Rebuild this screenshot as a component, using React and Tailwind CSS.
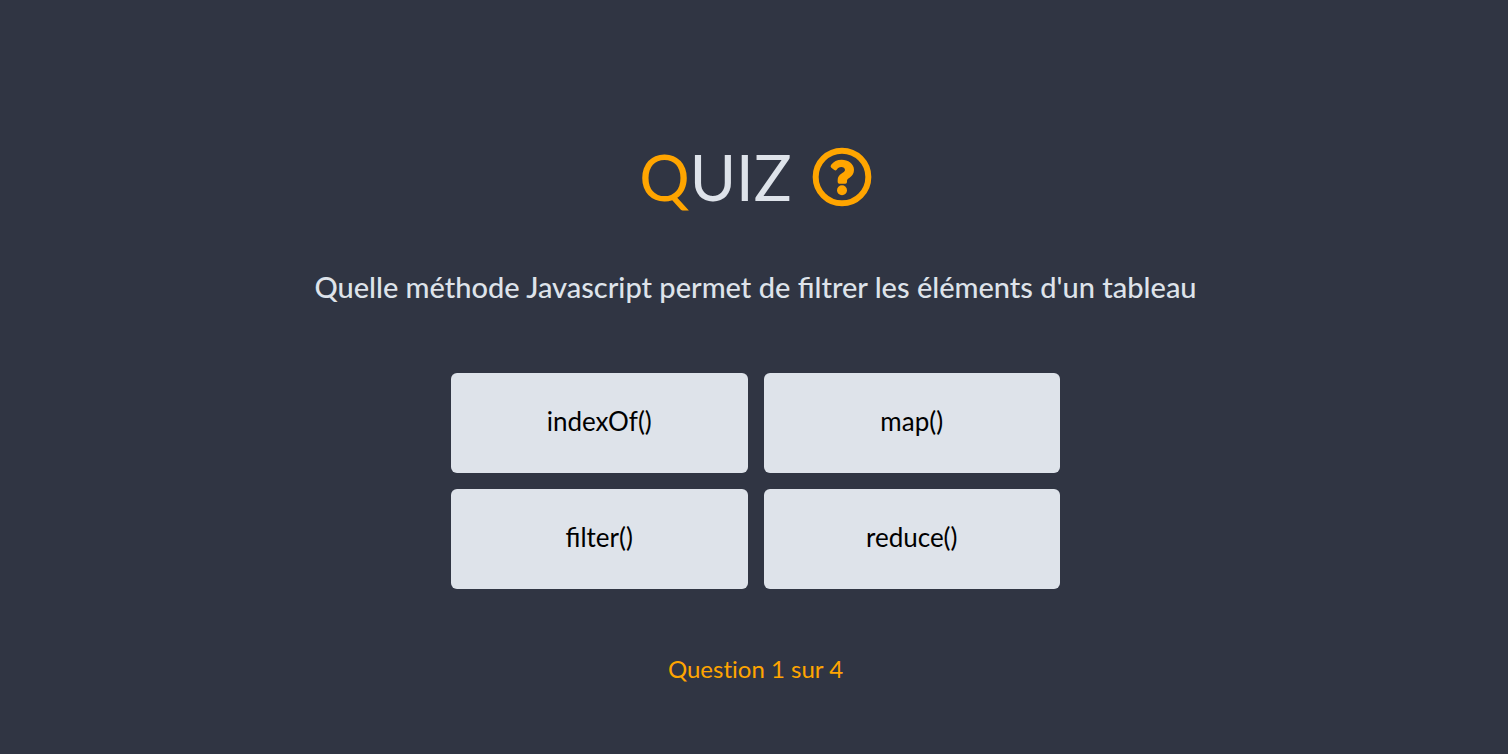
const answers = ["indexOf()", "map()", "filter()", "reduce()"];

function QuestionIcon({ className }) {
  return (
    <svg viewBox="0 0 180 180" className={className} aria-hidden="true">
      <circle cx="90" cy="90" r="79" fill="none" stroke="currentColor" strokeWidth="18" />
      <path
        fill="currentColor"
        d="M57 54C65 43 75 38 89 38C108 38 126 50 126 68C126 91 105 92 105 101V105Q105 110 100 110H82Q77 110 77 105V100C77 79 99 78 99 69C99 63 94 60 88 60C81 60 78 63 74 68Q71 72 67 69L58 62Q54 59 57 54Z"
      />
      <circle cx="90" cy="130" r="15" fill="currentColor" />
    </svg>
  );
}

export default function App() {
  return (
    <main className="flex min-h-screen flex-col items-center justify-center bg-[#303543] pt-[78px] pr-4 pl-[19px] font-['Lato','Liberation_Sans',sans-serif] text-[#dee3ea]">
      <h1 className="flex items-center gap-5 text-[63px] leading-[60px]">
        <span>
          <span className="text-[#ffa500]">Q</span>UIZ
        </span>
        <QuestionIcon className="size-[60px] text-[#ffa500]" />
      </h1>
      <h2 className="mt-[62px] text-center text-[29px] leading-[36px] font-medium">
        Quelle méthode Javascript permet de filtrer les éléments d'un tableau
      </h2>
      <div className="mt-[68px] grid w-full max-w-[609px] grid-cols-2 gap-4">
        {answers.map((answer) => (
          <button
            key={answer}
            type="button"
            className="h-[100px] rounded-md bg-[#dee3ea] pb-1 text-[26px] text-black"
          >
            {answer}
          </button>
        ))}
      </div>
      <p className="mt-16 text-[24px] leading-8 text-[#ffa500] [font-variant-ligatures:none]">
        Question 1 sur 4
      </p>
    </main>
  );
}
